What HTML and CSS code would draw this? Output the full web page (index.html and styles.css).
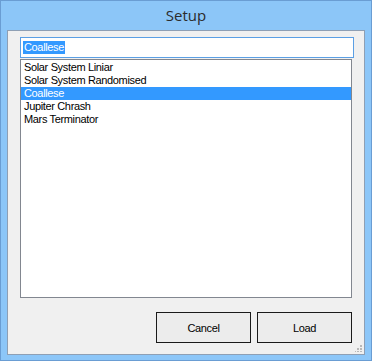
FILE: index.html
```html
<!DOCTYPE html>
<html lang="en">
<head>
  <meta charset="UTF-8" />
  <title>Setup</title>
  <link rel="stylesheet" href="styles.css">
</head>
<body>
  <div class="window">
    <div class="titlebar">Setup</div>

    <div class="client">
      <!-- combo text -->
      <div class="textbox"><span class="sel-text">Coallese</span></div>

      <!-- list of presets -->
      <div class="listbox">
        <div class="item">Solar System Liniar</div>
        <div class="item">Solar System Randomised</div>
        <div class="item selected">Coallese</div>
        <div class="item">Jupiter Chrash</div>
        <div class="item">Mars Terminator</div>
      </div>

      <div class="button-row">
        <button class="btn">Cancel</button>
        <button class="btn">Load</button>
      </div>

      <svg class="grip" width="7" height="7" viewBox="0 0 7 7">
        <rect x="5" y="0" width="2" height="2" fill="#b8b8b8"/>
        <rect x="2" y="3" width="2" height="2" fill="#b8b8b8"/>
        <rect x="5" y="3" width="2" height="2" fill="#b8b8b8"/>
        <rect x="-1" y="6" width="2" height="2" fill="#b8b8b8"/>
        <rect x="2" y="6" width="2" height="2" fill="#b8b8b8"/>
        <rect x="5" y="6" width="2" height="2" fill="#b8b8b8"/>
      </svg>
    </div>
  </div>
</body>
</html>
```

FILE: styles.css
```css
body {
  margin: 0;
  padding: 0;
  font-family: "Liberation Sans", Arial, sans-serif;
  font-size: 11px;
  letter-spacing: -0.35px;
}

.window {
  width: 372px;
  height: 361px;
  box-sizing: border-box;
  border: 1px solid #6a9dd3;
  background: #8cc6f8;
  display: flex;
  flex-direction: column;
}

.titlebar {
  height: 29px;
  line-height: 29px;
  text-align: center;
  font-family: "Open Sans", "Noto Sans", sans-serif;
  font-size: 15px;
  letter-spacing: 0;
  color: #2b2b2b;
}

.client {
  position: relative;
  flex: 1;
  margin: 0 6px 6px 6px;
  background: #f0f0f0;
  border: 1px solid #8e9fb4;
  padding: 6px 12px 11px 12px;
  display: flex;
  flex-direction: column;
}

.textbox {
  width: 330px;
  height: 17px;
  border: 1px solid #5b9fe4;
  background: #fff;
  padding: 2px 0 0 2px;
}

.sel-text {
  display: inline-block;
  background: #3399ff;
  color: #fff;
  line-height: 13px;
  padding: 0 1px;
  margin-top: 1px;
}

.listbox {
  margin-top: 1px;
  width: 330px;
  height: 236px;
  border: 1px solid #828790;
  background: #fff;
  padding-top: 1px;
}

.item {
  height: 13px;
  line-height: 13px;
  padding-left: 3px;
  color: #000;
  white-space: nowrap;
}

.item.selected {
  background: #3399ff;
  color: #fff;
}

.button-row {
  display: flex;
  justify-content: flex-end;
  gap: 6px;
  margin-top: 14px;
}

.btn {
  width: 95px;
  height: 31px;
  border: 1px solid #1a1a1a;
  background: #ececec;
  font-family: "Liberation Sans", Arial, sans-serif;
  font-size: 11px;
  letter-spacing: -0.35px;
  color: #000;
  padding: 0;
}

.grip {
  position: absolute;
  right: 2px;
  bottom: 2px;
}
```
